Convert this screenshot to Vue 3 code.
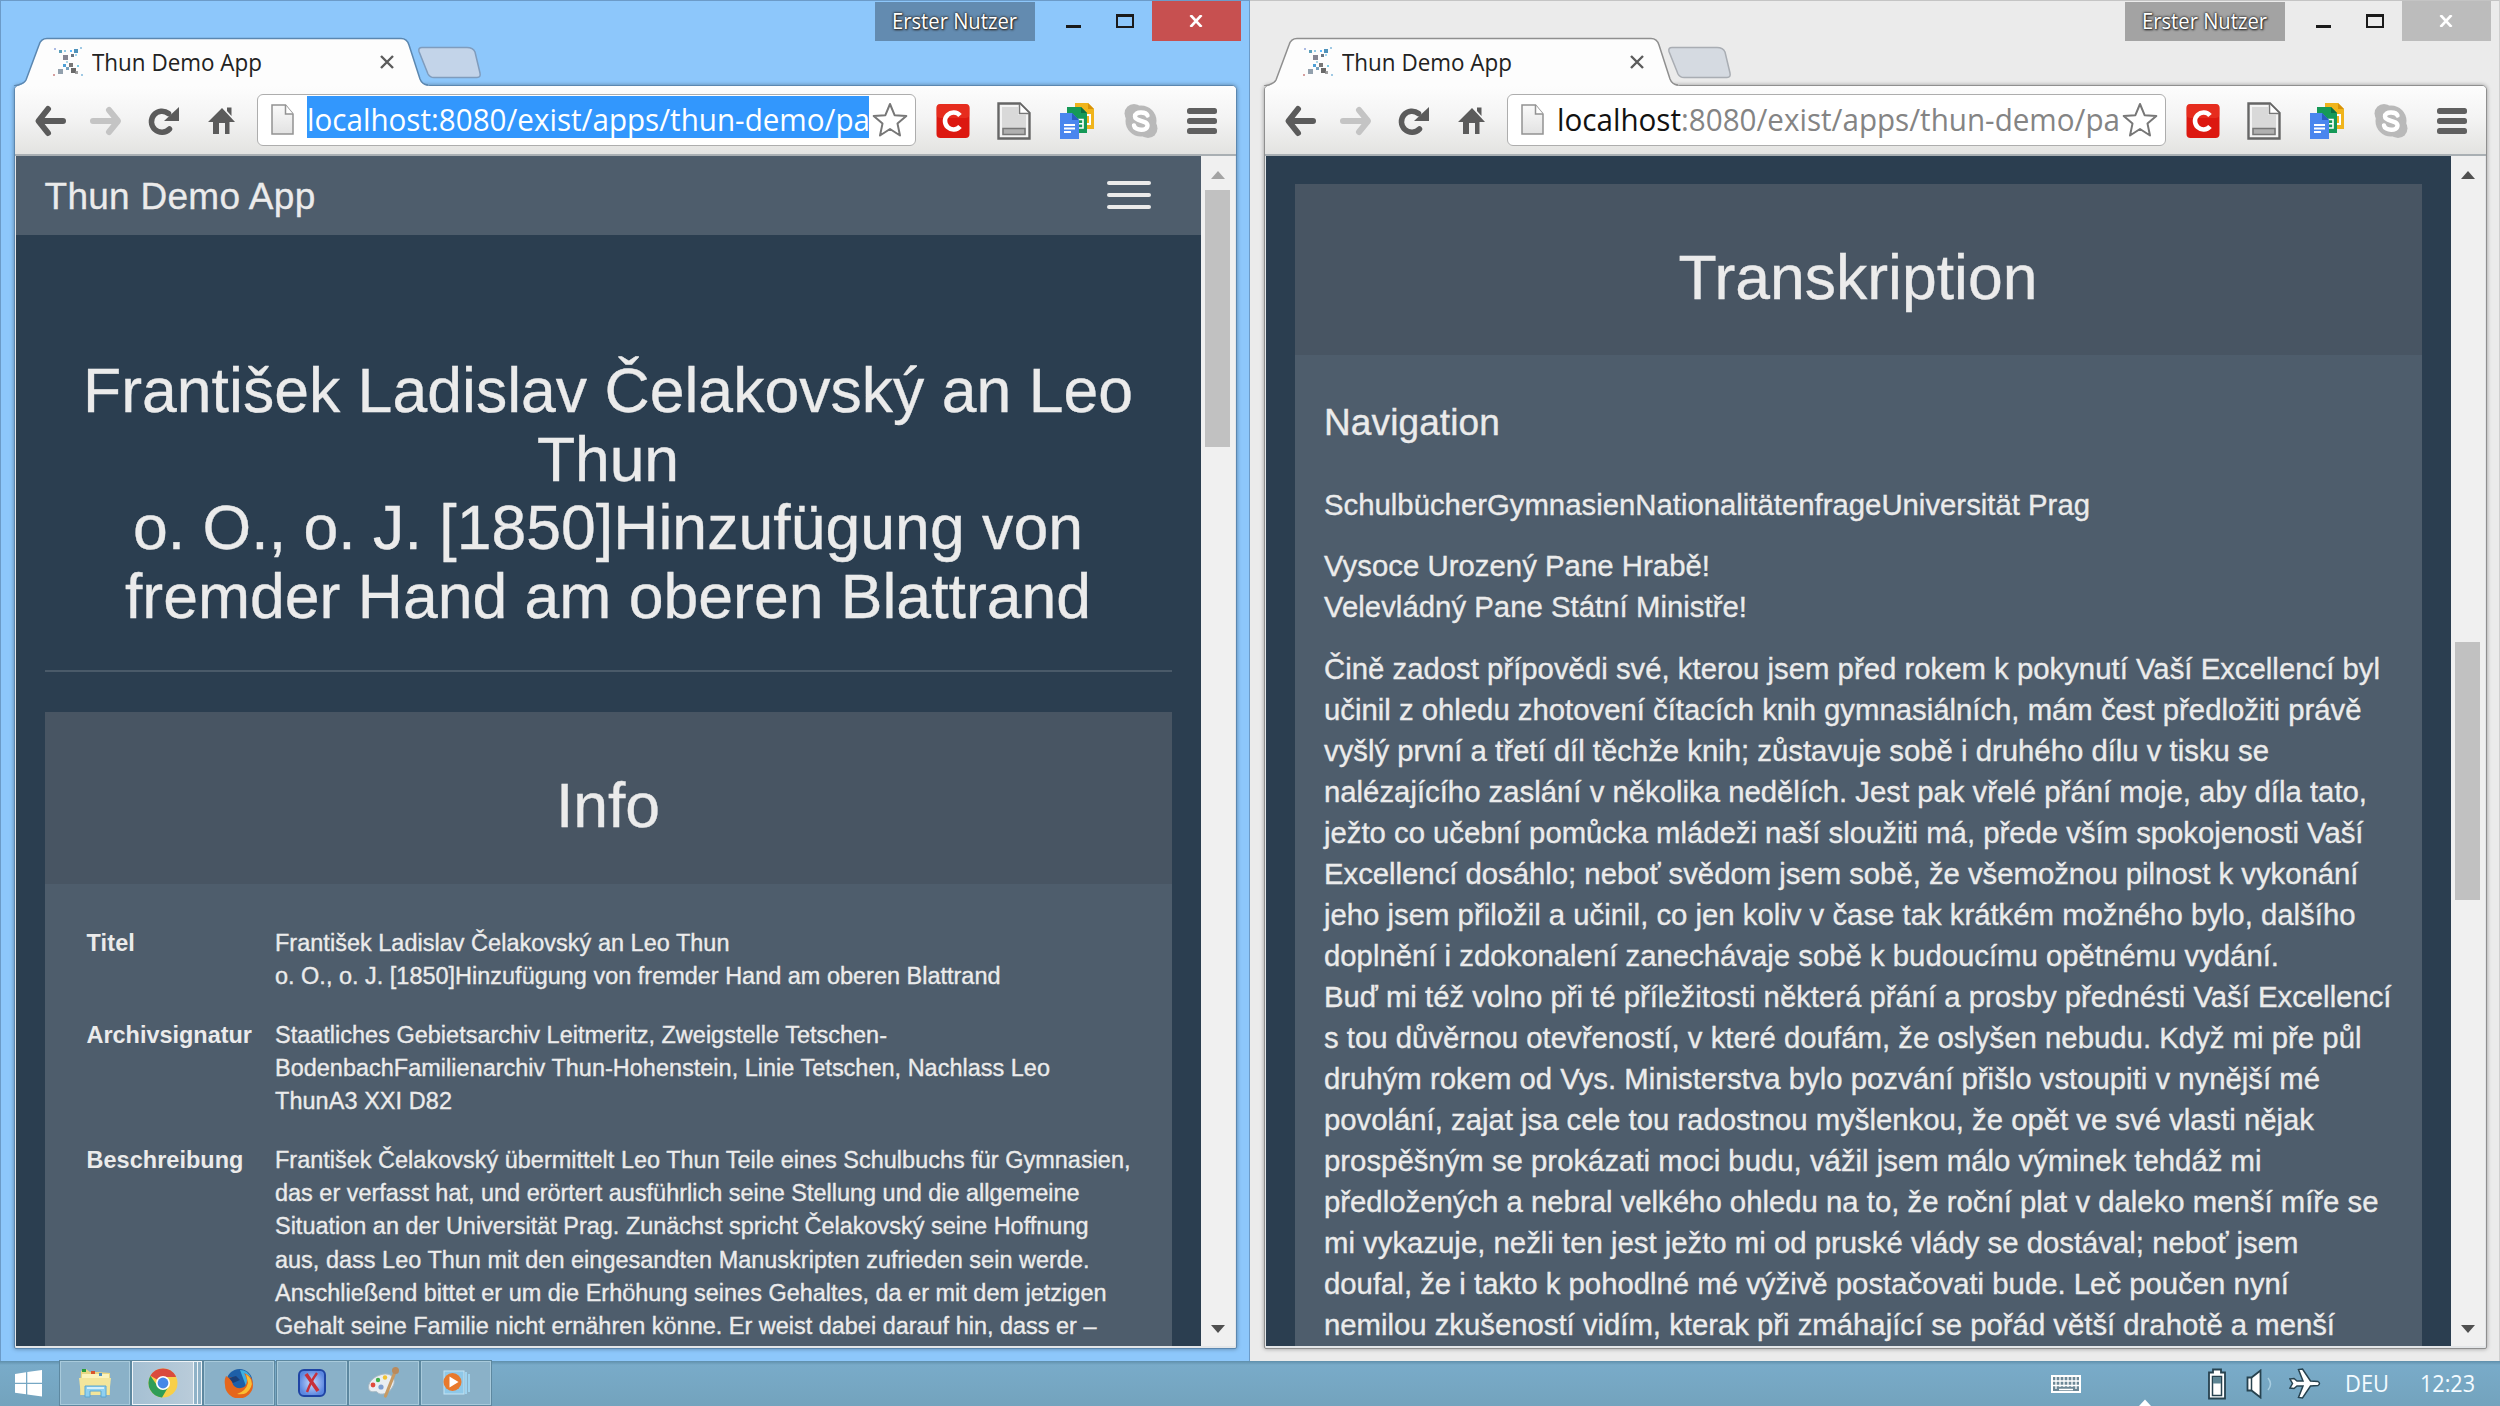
<script setup>
const applyFit = (el, binding) => {
  const target = binding.value
  if (!target) return
  el.style.display = 'inline-block'
  const natural = el.getBoundingClientRect().width
  if (binding.modifiers.scale) {
    el.style.transformOrigin = '0 0'
    el.style.transform = `scaleX(${target / natural})`
  } else {
    el.style.letterSpacing = `${(target - natural) / el.textContent.length}px`
  }
}
const vFit = { mounted: applyFit }

const windows = [
  { id: 'left', active: true, heading: true },
  { id: 'right', active: false, heading: false },
]

const title = [
  ['František Ladislav Čelakovský an Leo', 1050],
  ['Thun', 142],
  ['o. O., o. J. [1850]Hinzufügung von', 950],
  ['fremder Hand am oberen Blattrand', 966],
]

const info = [
  { label: ['Titel', 48.5], lines: [
    ['František Ladislav Čelakovský an Leo Thun', 454.5],
    ['o. O., o. J. [1850]Hinzufügung von fremder Hand am oberen Blattrand', 725.5],
  ] },
  { label: ['Archivsignatur', 165.5], lines: [
    ['Staatliches Gebietsarchiv Leitmeritz, Zweigstelle Tetschen-', 612],
    ['BodenbachFamilienarchiv Thun-Hohenstein, Linie Tetschen, Nachlass Leo', 775],
    ['ThunA3 XXI D82', 177],
  ] },
  { label: ['Beschreibung', 157], lines: [
    ['František Čelakovský übermittelt Leo Thun Teile eines Schulbuchs für Gymnasien,', 855.5],
    ['das er verfasst hat, und erörtert ausführlich seine Stellung und die allgemeine', 804.5],
    ['Situation an der Universität Prag. Zunächst spricht Čelakovský seine Hoffnung', 813.5],
    ['aus, dass Leo Thun mit den eingesandten Manuskripten zufrieden sein werde.', 814.5],
    ['Anschließend bittet er um die Erhöhung seines Gehaltes, da er mit dem jetzigen', 831.5],
    ['Gehalt seine Familie nicht ernähren könne. Er weist dabei darauf hin, dass er –', 821.5],
  ] },
]

const letter = [
  [['SchulbücherGymnasienNationalitätenfrageUniversität Prag', 766]],
  [['Vysoce Urozený Pane Hrabě!', 386], ['Velevládný Pane Státní Ministře!', 423]],
  [
    ['Čině zadost přípovědi své, kterou jsem před rokem k pokynutí Vaší Excellencí byl', 1056],
    ['učinil z ohledu zhotovení čítacích knih gymnasiálních, mám čest předložiti právě', 1037.5],
    ['vyšlý první a třetí díl těchže knih; zůstavuje sobě i druhého dílu v tisku se', 945],
    ['nalézajícího zaslání v několika nedělích. Jest pak vřelé přání moje, aby díla tato,', 1043],
    ['ježto co učební pomůcka mládeži naší sloužiti má, přede vším spokojenosti Vaší', 1039.5],
    ['Excellencí dosáhlo; neboť svědom jsem sobě, že všemožnou pilnost k vykonání', 1034.5],
    ['jeho jsem přiložil a učinil, co jen koliv v čase tak krátkém možného bylo, dalšího', 1031.5],
    ['doplnění i zdokonalení zanechávaje sobě k budoucímu opětnému vydání.', 955],
    ['Buď mi též volno při té příležitosti některá přání a prosby přednésti Vaší Excellencí', 1067.5],
    ['s tou důvěrnou otevřeností, v které doufám, že oslyšen nebudu. Když mi pře půl', 1037.5],
    ['druhým rokem od Vys. Ministerstva bylo pozvání přišlo vstoupiti v nynější mé', 996],
    ['povolání, zajat jsa cele tou radostnou myšlenkou, že opět ve své vlasti nějak', 990],
    ['prospěšným se prokázati moci budu, vážil jsem málo výminek tehdáž mi', 937.5],
    ['předložených a nebral velkého ohledu na to, že roční plat v daleko menší míře se', 1054.5],
    ['mi vykazuje, nežli ten jest ježto mi od pruské vlády se dostával; neboť jsem', 974.5],
    ['doufal, že i takto k pohodlné mé výživě postačovati bude. Leč poučen nyní', 965],
    ['nemilou zkušeností vidím, kterak při zmáhající se pořád větší drahotě a menší', 1011],
  ],
]

const specks = [
  [2, 1, 2, '#9ad'], [7, 3, 3, '#38a'], [12, 3, 2, '#7bd'], [18, 3, 2, '#3af'], [22, 2, 4, '#27a'], [28, 0, 2, '#8bd'],
  [11, 8, 5, '#667'], [19, 7, 3, '#456'], [23, 7, 2, '#8ce'], [14, 14, 2, '#9cd'], [17, 16, 4, '#555'], [11, 17, 3, '#28c'],
  [6, 22, 5, '#789'], [14, 20, 3, '#58a'], [19, 21, 5, '#444'], [25, 18, 2, '#5bd'], [23, 24, 3, '#888'], [1, 27, 2, '#c88'], [29, 27, 2, '#8bd'],
]
</script>

<template>
  <div class="desktop">
    <div class="windows">
      <section v-for="w in windows" :key="w.id" class="window" :class="{ active: w.active }">
        <header class="titlebar">
          <svg class="tab-shape" width="500" height="86" viewBox="0 0 500 86">
            <path class="newtab" d="M422 47.5H467Q473 47.5 475 52L480 73Q481 77.5 477 77.5H434Q430 77.5 428 74L419 51.5Q418 47.5 422 47.5Z" />
            <path fill="#fdfdfd" d="M14 86Q24 86 26 80L39 45Q41 38.5 47 38.5H401Q407 38.5 409 45L420 79Q422 86 430 86Z" />
            <path class="tab-line" d="M14 86Q24 84 26 80L39 45Q41 38.5 47 38.5H401Q407 38.5 409 45L420 79Q422 84.5 428 85" />
          </svg>
          <div class="tab">
            <svg class="favicon" width="32" height="30" viewBox="0 0 32 30">
              <rect v-for="(s, i) in specks" :key="i" :x="s[0]" :y="s[1]" :width="s[2]" :height="s[2]" :fill="s[3]" opacity=".8" />
            </svg>
            <div class="tab-title"><span v-fit.scale="170">Thun Demo App</span></div>
            <svg class="tab-close" width="14" height="14" viewBox="0 0 14 14"><path d="M1 1L13 13M13 1L1 13" stroke="#5c5c5c" stroke-width="2.4" /></svg>
          </div>
          <div class="user"><span v-fit.scale="125">Erster Nutzer</span></div>
          <div class="wbtn min"><i></i></div>
          <div class="wbtn max"><i></i></div>
          <div class="wclose"><svg width="14" height="12" viewBox="0 0 14 12"><path d="M1.5 0L12.5 12M12.5 0L1.5 12" stroke="#fff" stroke-width="2.6" /></svg></div>
        </header>

        <div class="frame">
          <div class="toolbar">
            <svg class="nav" width="232" height="40" viewBox="0 0 232 40">
              <g fill="none" stroke-linecap="round" stroke-linejoin="round" stroke-width="6">
                <path d="M32 8L22.500 20L32 32M24 20H47" stroke="#5b5b5b" />
                <path d="M93 9L102 20L93 31M77 20H100" stroke="#c4c4c4" />
                <path d="M152.500 12.500A10.500 10.500 0 1 0 153.500 28" stroke="#5b5b5b" stroke-width="5.500" />
              </g>
              <path d="M163 6V20H148Z" fill="#5b5b5b" />
              <path d="M206 7L219 21H213.500V33H209V22H203V33H197V21H192ZM211 6.500H215.500V15L211 10Z" fill="#5b5b5b" />
            </svg>
            <div class="omnibox">
              <svg width="24" height="32" viewBox="0 0 24 32">
                <defs><linearGradient :id="'pg' + w.id" x2="0" y2="1"><stop stop-color="#fafafa" /><stop offset="1" stop-color="#e2e2e2" /></linearGradient></defs>
                <path d="M1 1H14.500L22 10V30H1Z" :fill="`url(#pg${w.id})`" stroke="#929292" stroke-width="1.500" />
                <path d="M14.500 1V10H22" fill="#fff" stroke="#929292" stroke-width="1.500" />
              </svg>
              <div class="url"><span v-fit.scale="563"><b>localhost</b>:8080/exist/apps/thun-demo/pa</span></div>
              <svg class="star" width="36" height="36" viewBox="0 0 36 36"><path d="M18 2L22.600 13.200L34.300 14L25.500 21.600L28 33.500L18 27L8 33.500L10.500 21.600L1.700 14L13.400 13.200Z" fill="#fff" stroke="#777" stroke-width="2" stroke-linejoin="round" /></svg>
            </div>
            <div class="ext">
              <svg width="34" height="36" viewBox="0 0 34 36">
                <rect x=".5" y="1" width="33" height="34" rx="4" fill="#dc1810" /><rect x=".5" y="1" width="33" height="14" rx="4" fill="#f0402c" opacity=".5" />
                <path d="M24 12.500A8.500 8.500 0 1 0 24 23.500" fill="none" stroke="#fff" stroke-width="4.600" />
              </svg>
              <svg width="34" height="38" viewBox="0 0 34 38">
                <path d="M1.500 1.500H23L32.500 11V36.500H1.500Z" fill="#f4f4f4" stroke="#666" stroke-width="2.400" />
                <path d="M5 5H21V13H29V33H5Z" fill="#d9d9d9" /><path d="M22.500 2V11.500H32" fill="#fff" stroke="#777" stroke-width="1.500" />
                <rect x="6" y="26.500" width="22" height="6" fill="#b0b0b0" stroke="#777" stroke-width="1.500" />
              </svg>
              <svg width="36" height="38" viewBox="0 0 36 38">
                <path d="M16 1H29L35 7V27H16Z" fill="#f0b41c" /><path d="M29 1L35 7H29Z" fill="#d89208" /><rect x="26" y="13" width="5" height="9" fill="none" stroke="#fff" stroke-width="2" />
                <path d="M8 5H22L28 11V31H8Z" fill="#159957" /><path d="M22 5L28 11H22Z" fill="#0b7040" /><path d="M19 17.500H24V26H19M19 21.700H24" fill="none" stroke="#fff" stroke-width="1.600" />
                <path d="M1 11H13L20 18V37H1Z" fill="#4a86ee" /><path d="M13 11L20 18H13Z" fill="#2a5cc0" /><path d="M5 23H16M5 26.500H16M5 30H12" stroke="#fff" stroke-width="1.800" />
              </svg>
              <svg width="36" height="36" viewBox="0 0 36 36">
                <circle cx="18" cy="18" r="15.500" fill="#b9b9b9" /><circle cx="11" cy="10.500" r="9.500" fill="#b9b9b9" /><circle cx="25" cy="25.500" r="9.500" fill="#b9b9b9" />
                <path d="M24.500 12.500C23 8.500 12 8 12 13.500C12 19 24.500 16.500 24.500 22.500C24.500 28.500 12 28 11 22.500" fill="none" stroke="#fff" stroke-width="4.400" stroke-linecap="round" />
              </svg>
              <svg width="30" height="28" viewBox="0 0 30 28"><g fill="#606060"><rect width="30" height="6" y="1" rx="2.500" /><rect width="30" height="6" y="11" rx="2.500" /><rect width="30" height="6" y="21" rx="2.500" /></g></svg>
            </div>
          </div>

          <div class="viewport">
            <main v-if="w.heading" class="page">
              <nav class="navbar">
                <div><span v-fit="271">Thun Demo App</span></div>
                <div class="burger"><i></i><i></i><i></i></div>
              </nav>
              <div class="container">
                <h1 class="lines title"><div v-for="[t, n] in title" :key="t"><span v-fit="n">{{ t }}</span></div></h1>
                <hr />
                <article class="card">
                  <h1 class="card-head">Info</h1>
                  <dl>
                    <div v-for="row in info" :key="row.label[0]" class="row">
                      <dt><span v-fit="row.label[1]">{{ row.label[0] }}</span></dt>
                      <dd><div v-for="[t, n] in row.lines" :key="t"><span v-fit="n">{{ t }}</span></div></dd>
                    </div>
                  </dl>
                </article>
              </div>
            </main>
            <main v-else class="page">
              <div class="container second">
                <article class="card">
                  <h1 class="card-head">Transkription</h1>
                  <div class="letter">
                    <h3><span v-fit="176">Navigation</span></h3>
                    <p v-for="(p, i) in letter" :key="i"><span v-for="[t, n] in p" :key="t" class="line"><span v-fit="n">{{ t }}</span></span></p>
                  </div>
                </article>
              </div>
            </main>
            <aside class="scrollbar">
              <svg class="up" width="14" height="8" viewBox="0 0 14 8"><path d="M0 8L7 0L14 8Z" /></svg>
              <div class="thumb"></div>
              <svg class="down" width="14" height="8" viewBox="0 0 14 8"><path d="M0 0H14L7 8Z" /></svg>
            </aside>
          </div>
        </div>
      </section>
    </div>

    <footer class="taskbar">
      <div class="start"><svg width="27" height="27" viewBox="0 0 27 27"><path d="M0 4L11 2.300V12.700H0ZM12.300 2L27 0V12.700H12.300ZM0 14H11V24.300L0 22.700ZM12.300 14H27V26.500L12.300 24.500Z" fill="#fff" /></svg></div>
      <div class="task">
        <svg width="34" height="30" viewBox="0 0 34 30">
          <path d="M3 3L8 1L12 4H20L32 5V27H2Z" fill="#e9d684" /><path d="M4 6H31V10H4Z" fill="#fbf3bd" /><path d="M1 10H33L31 27H3Z" fill="#f3e59b" />
          <rect x="4" y="1" width="4" height="3" fill="#2a9d3c" /><rect x="13" y="3" width="4" height="3" fill="#d9532c" /><rect x="21" y="5" width="3" height="3" fill="#4a90c8" />
          <path d="M7 18H28V29H23V23H12V29H7Z" fill="#8fd0f0" stroke="#5aa6d2" /><path d="M9 19H26V21H9Z" fill="#d5f0fb" />
        </svg>
      </div>
      <div class="task on">
        <svg width="30" height="30" viewBox="0 0 30 30">
          <circle cx="15" cy="15" r="14.500" fill="#f8cf48" /><path d="M15 15L2.400 7.800A14.500 14.500 0 0 1 27.600 7.800L28 9H15Z" fill="#da4a3c" />
          <path d="M2.400 7.800A14.500 14.500 0 0 0 14 29.500L20.500 18.500L9.500 18Z" fill="#2f9d56" />
          <circle cx="15" cy="15" r="7" fill="#fff" /><circle cx="15" cy="15" r="5.400" fill="#4688e8" />
        </svg>
      </div>
      <div class="task">
        <svg width="30" height="30" viewBox="0 0 30 30">
          <circle cx="15.500" cy="14" r="13" fill="#1d5fa8" /><path d="M16 2A12 12 0 0 1 27 10L22 18Z" fill="#3fb0e0" />
          <path d="M2 8L5 10Q8 8 12 11L8 14Q10 21 17 20Q23 19 23 12Q22 8 20 5Q29 8 29 17A14 13.500 0 0 1 1 17Q0 12 2 8Z" fill="#e5661c" />
          <path d="M22 6Q30 12 27 19Q23 28 13 26Q22 23 24 15Z" fill="#fbbf33" /><path d="M5 10L12 8L16 12L9 15Z" fill="#1a3f78" />
        </svg>
      </div>
      <div class="task">
        <svg width="28" height="28" viewBox="0 0 28 28">
          <defs><radialGradient id="oxy"><stop stop-color="#c8dafc" /><stop offset="1" stop-color="#5b87e0" /></radialGradient></defs>
          <rect x="1" y="1" width="26" height="26" rx="5" fill="url(#oxy)" stroke="#1f44a4" stroke-width="2" />
          <path d="M8 5L20 22" stroke="#c8303a" stroke-width="3.600" /><path d="M19 4Q13 12 9 23" fill="none" stroke="#c8303a" stroke-width="2.400" />
        </svg>
      </div>
      <div class="task">
        <svg width="34" height="32" viewBox="0 0 34 32">
          <path d="M13 8C24 4 30 12 26 19C22 28 13 28 11 26C9 23 7 26 3 24C-1 20 3 11 13 8Z" fill="#e9eef2" stroke="#a9bac4" />
          <circle cx="6" cy="18" r="2.400" fill="#e04a3a" /><circle cx="11" cy="13" r="2.200" fill="#42b04a" /><circle cx="18" cy="10.500" r="2.200" fill="#f1c232" /><circle cx="14" cy="20" r="2.600" fill="#7f9fd0" />
          <path d="M28 5L18.500 29" stroke="#c79a63" stroke-width="3.200" stroke-linecap="round" /><circle cx="28.500" cy="3.500" r="3.500" fill="#b98a5c" />
        </svg>
      </div>
      <div class="task">
        <svg width="28" height="26" viewBox="0 0 28 26">
          <path d="M24 2V24M27 4V22" stroke="#9fd3ef" stroke-width="2" /><rect x="2" y="1" width="20" height="23" fill="#8fc8e8" stroke="#c3e4f4" />
          <circle cx="10.500" cy="12" r="9" fill="#e8792c" /><path d="M7.500 6.500L16.500 12L7.500 17.500Z" fill="#fff" />
        </svg>
      </div>

      <div class="tray">
        <svg width="30" height="18" viewBox="0 0 30 18"><rect x="1" y="1" width="28" height="16" fill="#6c8796" stroke="#fff" stroke-width="2" /><path d="M2 6H28M2 10.500H28M5 2V14M9 2V12M13 2V12M17 2V12M21 2V12M25 2V14M8 14.500H22" stroke="#fff" stroke-width="1.300" /></svg>
        <svg class="notch" width="14" height="7" viewBox="0 0 14 7"><path d="M1 7L7 .5L13 7Z" fill="#fff" /></svg>
        <svg class="battery" width="20" height="32" viewBox="0 0 20 32"><path d="M6 1.500H14V4.500H18V30.500H2V4.500H6Z" fill="#fff" stroke="#27424f" stroke-width="1.800" /><rect x="5.500" y="8.500" width="9" height="19" fill="#fff" stroke="#27424f" stroke-width="1.500" /><rect x="6" y="9" width="8" height="6.500" fill="#5e8594" /></svg>
        <svg class="speaker" width="28" height="30" viewBox="0 0 28 30"><path d="M1.500 8.500H5.500L14.500 1.500V28.500L5.500 21.500H1.500Z" fill="#fff" stroke="#27424f" stroke-width="1.800" /><path d="M5.500 8.500V21.500" stroke="#27424f" stroke-width="1.500" /><path d="M22 9Q27 15 22 21" fill="none" stroke="#a7cde0" stroke-width="1.500" /></svg>
        <svg class="plane" width="32" height="31" viewBox="0 0 32 31"><path d="M1 11L5 10.500L8 13H14L9.500 1.500L13.500 1L21.500 13L29 13.500Q32 15.500 29 17.500L21.500 18L13.500 30L9.500 29.500L14 18H8L5 20.500L1 20L3.500 15.500Z" fill="#fff" stroke="#27424f" stroke-width="1.500" /></svg>
        <div class="lang"><span v-fit.scale="44">DEU</span></div>
        <div class="clock"><span v-fit.scale="55">12:23</span></div>
      </div>
    </footer>
  </div>
</template>

<style>
body { margin: 0; overflow: hidden; }
</style>

<style scoped>
* { box-sizing: border-box; }
.desktop { width: 2500px; height: 1406px; overflow: hidden; display: flex; flex-direction: column; font-family: "Liberation Sans", Arial, sans-serif; color: #ebebeb; white-space: nowrap; }
svg { display: block; flex: none; }
.windows { display: flex; height: 1361px; flex: none; }
.window { --edge: #8f8f8f; width: 1250px; height: 1361px; background: #ebebeb; border-top: 1px solid #c4c4c4; border-right: 1px solid #cfcfcf; display: flex; flex-direction: column; }
.window.active { --edge: #5b87b0; background: #8dc7fb; border-color: #6c9bc8; border-left: 1px solid #6c9bc8; }
.window.active .titlebar { margin-left: -1px; }

.titlebar { height: 84px; width: 1250px; flex: none; display: flex; align-items: flex-start; position: relative; }
.tab-shape { position: absolute; left: 0; top: -1px; z-index: 1; }
.tab-line { fill: none; stroke: var(--edge); stroke-width: 1.5; }
.newtab { fill: #d5dae1; stroke: #a9adb3; stroke-width: 1.5; }
.active .newtab { fill: #c3d4e9; stroke: #7f9cbd; }
.tab { position: relative; z-index: 2; display: flex; align-items: center; width: 412px; height: 46px; margin: 38px 463px 0 0; padding-left: 52px; }
.tab-title { width: 288px; margin-left: 7.500px; font: 23px/30px "Open Sans", "Noto Sans", sans-serif; color: #222; }
.user { width: 160px; height: 39px; margin-top: 1px; padding-left: 17px; background: #a3a3a3; color: #fff; font: 21px/39px "Open Sans", "Noto Sans", sans-serif; text-shadow: 0 0 3px #222, 0 0 2px #333, 1px 1px 2px #333; }
.active .user { background: #638bb0; }
.wbtn i { display: block; }
.min { padding: 24px 0 0 31px; width: 81px; }
.min i { width: 15px; height: 3px; background: #1a1a1a; }
.max { padding-top: 13px; width: 35.500px; }
.max i { width: 18px; height: 14px; border: 2px solid #1a1a1a; border-top-width: 3px; }
.wclose { width: 89.500px; height: 40px; background: #bcbcbc; display: flex; align-items: center; justify-content: center; }
.active .wclose { background: #c75050; }

.frame { margin-left: 14px; width: 1223px; height: 1264px; border: 1.500px solid var(--edge); border-radius: 5px 5px 2px 2px; background: #e4e6e8; box-shadow: 0 0 4px rgba(0, 0, 0, .35); display: flex; flex-direction: column; overflow: hidden; }
.active .frame { margin-left: 13px; }
.toolbar { height: 70px; flex: none; padding-left: 1px; background: linear-gradient(#fdfdfd, #f4f4f4 45%, #e3e3e1); border-bottom: 2px solid #a9afb3; display: flex; align-items: flex-start; }
.nav { margin: 15px 0 0; }
.omnibox { width: 659px; height: 52px; margin: 8px 0 0 9px; background: #fff; border: 1.500px solid #adadad; border-radius: 6px; display: flex; align-items: center; padding-left: 13px; }
.url { width: 562px; height: 42px; margin: -7px 0 0 12px; font: 31.500px/46px "Open Sans", "Noto Sans", sans-serif; color: #848484; overflow: hidden; }
.url b { font-weight: 400; color: #111; }
.active .url { background: #3297fd; color: #fff; }
.active .url b { color: #fff; }
.star { margin-left: 3px; }
.ext { display: flex; align-items: center; margin: 16px 0 0 19.500px; gap: 27.800px; }

.viewport { display: flex; height: 1190px; padding-left: .5px; flex: none; }
.page { width: 1185px; height: 1190px; overflow: hidden; background: #2b3e50; }
.navbar { height: 79px; background: #4e5d6c; display: flex; justify-content: space-between; padding: 0 50px 0 29px; font-size: 37px; line-height: 82px; -webkit-text-stroke: .3px; }
.burger { width: 44px; padding-top: 25px; display: flex; flex-direction: column; gap: 8px; }
.burger i { height: 4px; border-radius: 2px; background: #ebebeb; }
.container { padding: 121.300px 29px 0; -webkit-text-stroke: .35px; }
.container.second { padding-top: 27.500px; }
h1, h3, p, dl, dd { margin: 0; font-weight: 400; }
h1 { font-size: 62.500px; line-height: 68.500px; text-align: center; }
hr { height: 2px; border: 0; background: #4a5a69; margin: 39.700px 0 40.500px; }
.card { background: #4e5d6c; height: 1400px; }
.card-head { height: 172px; padding-top: 59px; background: #485563; }
.second .card-head { height: 171px; }
dl { padding: 42.500px 0 0 42px; font-size: 23.440px; line-height: 33.200px; }
dl span, .letter span { vertical-align: top; }
.row { display: flex; margin-bottom: 25.500px; }
dt { width: 188.500px; font-weight: 700; -webkit-text-stroke: 0; }
.letter { padding: 47px 0 0 29.500px; font-size: 29.300px; line-height: 41.060px; }
h3 { font-size: 37px; line-height: 41px; margin-bottom: 41px; }
p { margin-bottom: 20.500px; }
.line { display: block; height: 41.060px; }

.scrollbar { width: 34px; height: 1190px; background: #f0f0f0; display: flex; flex-direction: column; align-items: center; }
.scrollbar path { fill: #505050; }
.active .up path { fill: #a3a3a3; }
.up { margin-top: 14.500px; }
.thumb { width: 25px; height: 258px; background: #c1c1c1; margin-top: 463.500px; }
.active .thumb { height: 257px; margin-top: 11.500px; }
.down { margin: auto 0 13px; }

.taskbar { height: 45px; flex: none; background: linear-gradient(#5f8fab, #79abc9 4px, #73a3bd); display: flex; position: relative; }
.start { width: 60px; padding: 9px 0 0 15px; }
.task { width: 70px; height: 44px; margin-right: 2.200px; border: 1px solid #a8cadb; outline: 1px solid #5d88a0; outline-offset: 0; background: #8ab1c8; display: flex; align-items: center; justify-content: center; }
.task.on { border: 1px solid #eef4f8; background: linear-gradient(90deg, #a5c0d3, #bccdda); box-shadow: inset -3px 0 #8fb2c7, inset -4px 0 #eef4f8, inset -7px 0 #8fb2c7, inset -8px 0 #eef4f8; padding-right: 8px; }
.tray { display: flex; align-items: center; margin-left: auto; width: 449px; height: 45px; font: 23px/47px "Open Sans", "Noto Sans", sans-serif; color: #f4fbff; }
.notch { margin: 38px 0 0 57px; }
.battery { margin-left: 55px; }
.speaker { margin-left: 19px; }
.plane { margin-left: 15px; }
.lang { width: 75px; margin-left: 24px; }
.clock { width: 54px; }
</style>
